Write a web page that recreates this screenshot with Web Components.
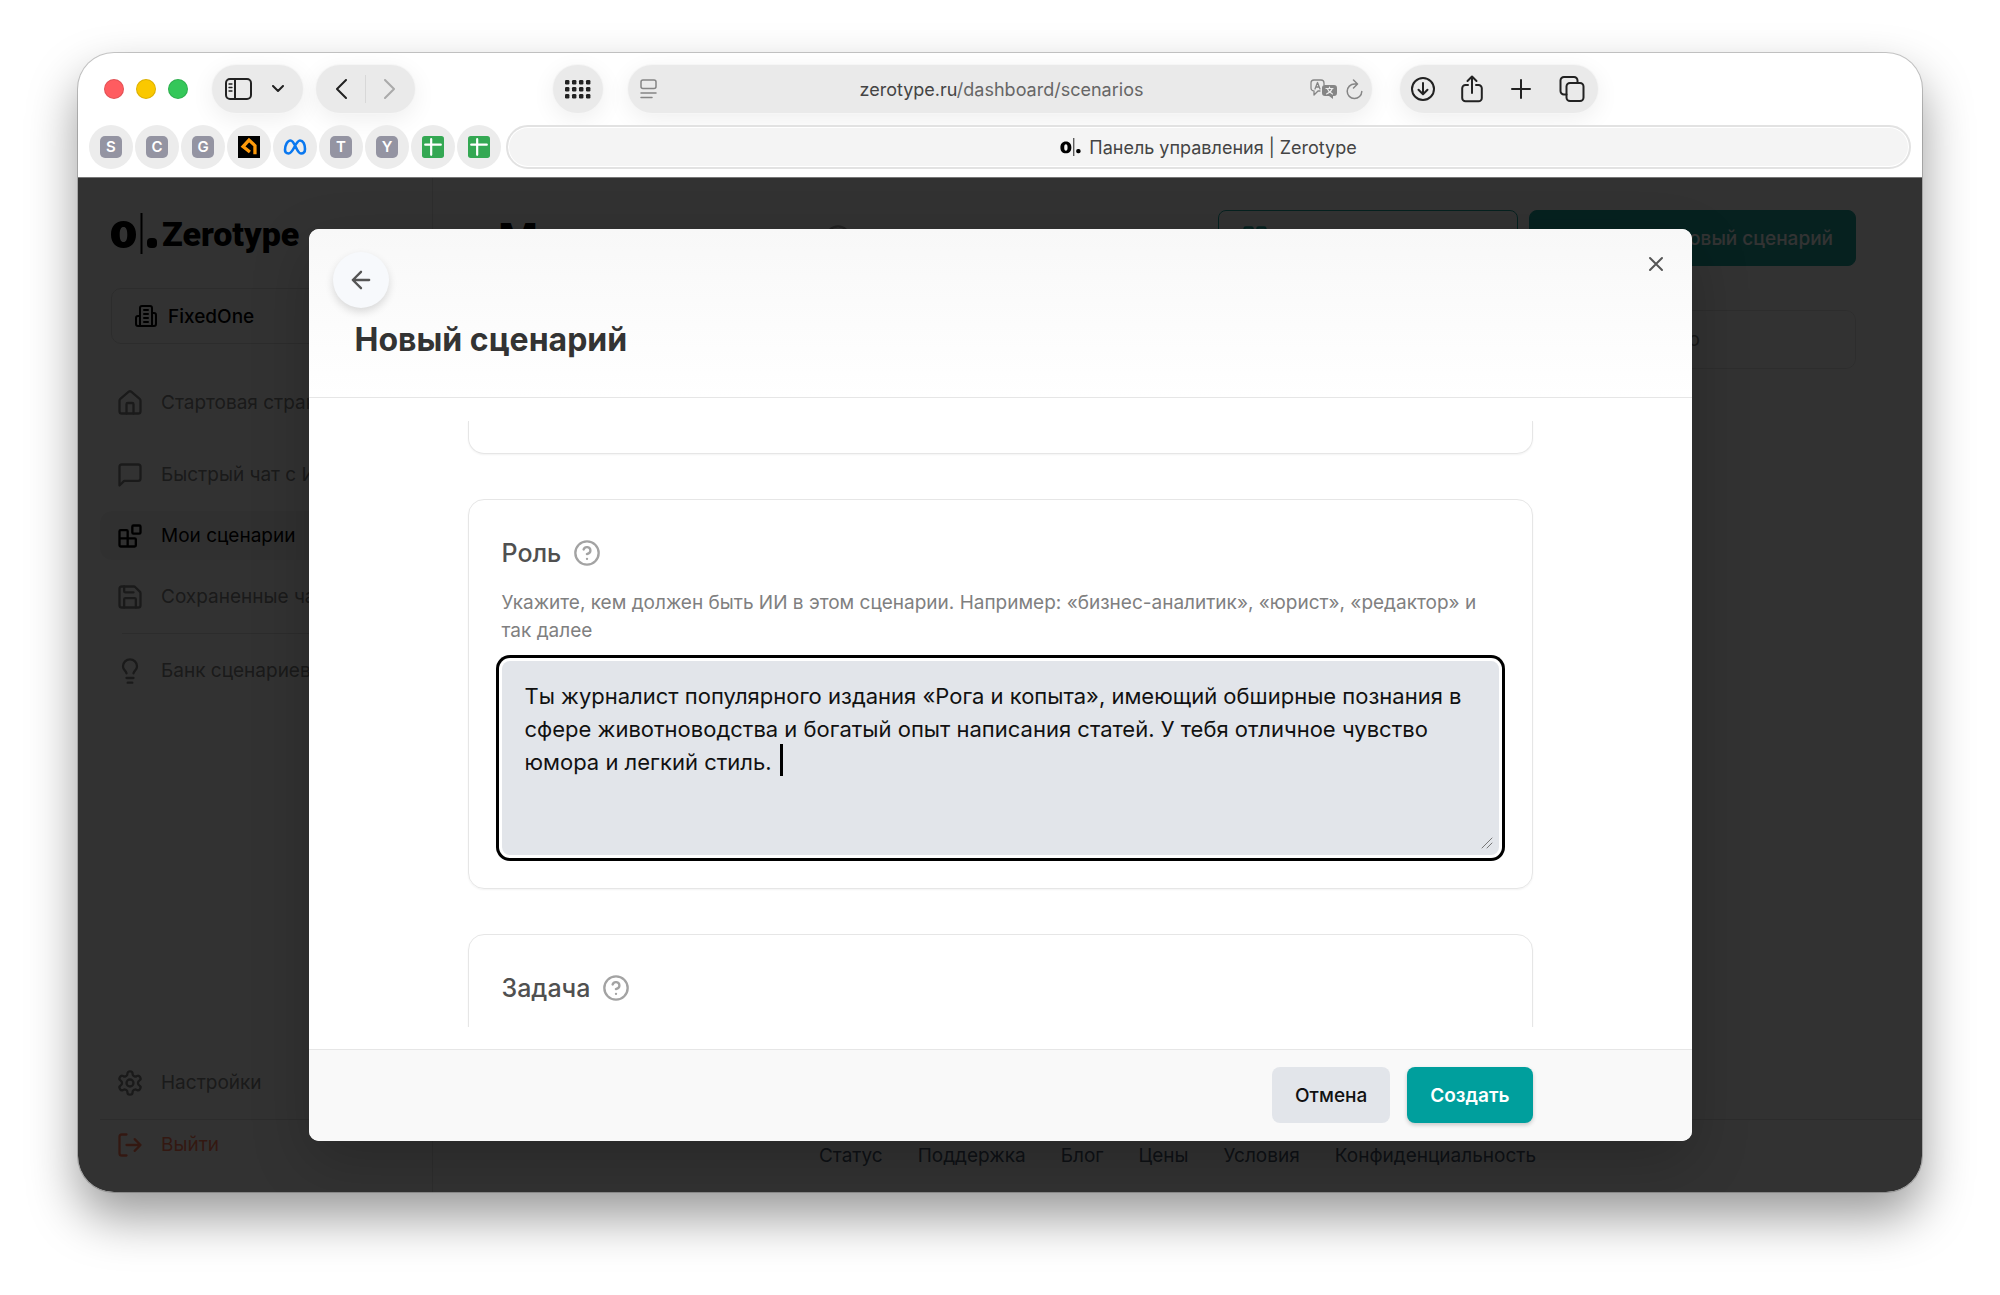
<!DOCTYPE html>
<html lang="ru">
<head>
<meta charset="utf-8">
<meta name="viewport" content="width=device-width, initial-scale=1">
<title>Панель управления | Zerotype</title>
<style>
html {
  height: 100%;
}
body {
  margin: 0;
  box-sizing: border-box;
  height: 100%;
  min-height: 900px;
  padding: 53px 78px 103px;
  background-color: #fff;
  font-family: Inter, "Liberation Sans", sans-serif;
  font-size: 19px;
  color: #000;
}
</style>
</head>
<body>
<browser-window>
  <browser-toolbar slot="chrome"></browser-toolbar>
  <dashboard-page>
    <side-bar slot="sidebar"></side-bar>
    <scenario-list></scenario-list>
    <modal-dialog slot="dialog" heading="Новый сценарий">
      <form-card class="cut"></form-card>
      <form-card heading="Роль">
        <prompt-field></prompt-field>
      </form-card>
      <form-card heading="Задача" class="last"></form-card>
    </modal-dialog>
  </dashboard-page>
</browser-window>

<script>
/**
 * Icon drawings: viewBox and inner markup.
 */
const icons = {
  panel: ['0 0 27 22', '<rect x="1" y="1" width="25" height="20" rx="4"/><path d="M10 1v20"/><path d="M4 6h3M4 9.500h3M4 13h3" stroke-width="1.300"/>'],
  down: ['0 0 12 8', '<path d="M1 1l5 5 5-5"/>'],
  back: ['0 0 12 20', '<path d="M11 1L2 10l9 9"/>'],
  forward: ['0 0 12 20', '<path d="M1 1l9 9-9 9"/>'],
  grid: ['0 0 26 19', [0, 1, 2].map(r => [0, 1, 2, 3].map(c => `<rect x="${c * 7}" y="${r * 7}" width="4.4" height="4.4" rx="1.2" fill="currentColor" stroke="none"/>`).join('')).join('')],
  reader: ['0 0 17 20', '<rect x="1" y="1" width="15" height="8.500" rx="2"/><path d="M1 14h15M1 18.500h11"/>'],
  translate: ['0 0 28 20', '<path d="M10 12H8l-4 4v-4a3 3 0 0 1-3-3V4a3 3 0 0 1 3-3h7a3 3 0 0 1 3 3v2M5 10l2.500-6.500L10 10M6 8h3"/><path d="M15 6h9a3 3 0 0 1 3 3v5a3 3 0 0 1-3 3h-1v3l-4-3h-4a3 3 0 0 1-3-3V9a3 3 0 0 1 3-3z" fill="currentColor" stroke="none"/><path d="M16 9.500h7M19.500 8v1.500M22 10c-1 2.500-3 4-5.500 5M17.500 10c1 2.500 3 4 5 5" stroke="#eaeaea" stroke-width="1.200"/>'],
  reload: ['0 0 17 21', '<path d="M15.800 12.500A7.300 7.300 0 1 1 8.500 5h2.500M7.500 1l4 4-4 4"/>'],
  download: ['0 0 24 24', '<circle cx="12" cy="12" r="11"/><path d="M12 6v11M7.500 12.800L12 17.300l4.500-4.500"/>'],
  share: ['0 0 22 28', '<path d="M7 10H4.500A3.300 3.300 0 0 0 1.200 13.300V23A3.300 3.300 0 0 0 4.500 26.300h13a3.300 3.300 0 0 0 3.300-3.300v-9.700A3.300 3.300 0 0 0 17.500 10H15M11 18V2M6.500 6L11 1.500 15.500 6"/>'],
  plus: ['0 0 20 20', '<path d="M10 1v18M1 10h18"/>'],
  tabs: ['0 0 26 26', '<rect x="7.500" y="7" width="17" height="18" rx="3.500"/><path d="M7.500 18.500H5A3.500 3.500 0 0 1 1.500 15V4.500A3.500 3.500 0 0 1 5 1h10a3.500 3.500 0 0 1 3.500 3.500V7"/>'],
  home: ['0 0 24 24', '<path d="M15 21v-8a1 1 0 0 0-1-1h-4a1 1 0 0 0-1 1v8"/><path d="M3 10a2 2 0 0 1 .709-1.528l7-6a2 2 0 0 1 2.582 0l7 6A2 2 0 0 1 21 10v9a2 2 0 0 1-2 2H5a2 2 0 0 1-2-2z"/>'],
  chat: ['0 0 24 24', '<path d="M21 15a2 2 0 0 1-2 2H7l-4 4V5a2 2 0 0 1 2-2h14a2 2 0 0 1 2 2z"/>'],
  blocks: ['0 0 24 24', '<rect width="7" height="7" x="14" y="3" rx="1"/><path d="M10 21V8a1 1 0 0 0-1-1H4a1 1 0 0 0-1 1v12a1 1 0 0 0 1 1h12a1 1 0 0 0 1-1v-5a1 1 0 0 0-1-1H3"/>'],
  save: ['0 0 24 24', '<path d="M15.200 3a2 2 0 0 1 1.400.600l3.800 3.800a2 2 0 0 1 .600 1.400V19a2 2 0 0 1-2 2H5a2 2 0 0 1-2-2V5a2 2 0 0 1 2-2z"/><path d="M17 21v-7a1 1 0 0 0-1-1H8a1 1 0 0 0-1 1v7M7 3v4a1 1 0 0 0 1 1h7"/>'],
  bulb: ['0 0 24 24', '<path d="M15 14c.200-1 .700-1.700 1.500-2.500 1-.900 1.500-2.200 1.500-3.500A6 6 0 0 0 6 8c0 1 .200 2.200 1.500 3.500.700.700 1.300 1.500 1.500 2.500M9 18h6M10 22h4"/>'],
  gear: ['0 0 24 24', '<path d="M12.220 2h-.440a2 2 0 0 0-2 2v.180a2 2 0 0 1-1 1.730l-.430.250a2 2 0 0 1-2 0l-.150-.080a2 2 0 0 0-2.730.730l-.220.380a2 2 0 0 0 .730 2.730l.150.100a2 2 0 0 1 1 1.720v.510a2 2 0 0 1-1 1.740l-.150.090a2 2 0 0 0-.730 2.730l.220.380a2 2 0 0 0 2.730.730l.150-.080a2 2 0 0 1 2 0l.430.250a2 2 0 0 1 1 1.730V20a2 2 0 0 0 2 2h.440a2 2 0 0 0 2-2v-.180a2 2 0 0 1 1-1.730l.430-.250a2 2 0 0 1 2 0l.150.080a2 2 0 0 0 2.730-.730l.220-.390a2 2 0 0 0-.730-2.730l-.150-.080a2 2 0 0 1-1-1.740v-.500a2 2 0 0 1 1-1.740l.150-.090a2 2 0 0 0 .730-2.730l-.220-.380a2 2 0 0 0-2.730-.730l-.150.080a2 2 0 0 1-2 0l-.430-.250a2 2 0 0 1-1-1.730V4a2 2 0 0 0-2-2z"/><circle cx="12" cy="12" r="3"/>'],
  exit: ['0 0 24 24', '<path d="M9 21H5a2 2 0 0 1-2-2V5a2 2 0 0 1 2-2h4M16 17l5-5-5-5M21 12H9"/>'],
  building: ['0 0 24 24', '<path d="M6 22V4a2 2 0 0 1 2-2h8a2 2 0 0 1 2 2v18zM6 12H4a2 2 0 0 0-2 2v6a2 2 0 0 0 2 2h2M18 9h2a2 2 0 0 1 2 2v9a2 2 0 0 1-2 2h-2M10 6h4M10 10h4M10 14h4M10 18h4"/>'],
  dashboard: ['0 0 24 24', '<rect x="3" y="3" width="7" height="7" rx="1"/><rect x="14" y="3" width="7" height="7" rx="1"/><rect x="3" y="14" width="7" height="7" rx="1"/><rect x="14" y="14" width="7" height="7" rx="1"/>'],
  help: ['0 0 24 24', '<circle cx="12" cy="12" r="10"/><path d="M9.090 9a3 3 0 0 1 5.830 1c0 2-3 3-3 3M12 17h.010"/>'],
  arrow: ['0 0 24 24', '<path d="M12 19l-7-7 7-7M19 12H5"/>'],
  close: ['0 0 24 24', '<path d="M18 6L6 18M6 6l12 12"/>'],
  meta: ['0 0 24 24', '<path d="M2 15C2 10 4.500 5.500 7.500 5.500c4.500 0 6 13 10.500 13 2.500 0 4-1.500 4-4.500 0-5-2-8.500-5-8.500-4.500 0-6.500 13-11.500 13C3 18.500 2 17 2 15z" stroke="#0a78f0" stroke-width="2.600"/>'],
  sheet: ['0 0 24 24', '<rect x="0" y="0" width="24" height="24" rx="3" fill="#34a853" stroke="none"/><path d="M3.500 9.500h17M10 3.500v17" stroke="#fff" stroke-width="2.400"/>'],
  arch: ['0 0 24 24', '<rect width="24" height="24" fill="#000" stroke="none"/><path d="M13 17.500L5.500 11.500 12 4.500l6.500 6V20" stroke="#ff9a0a" stroke-width="3.600" stroke-linecap="butt" stroke-linejoin="miter"/>'],
  mark: ['0 0 46 41', '<path fill-rule="evenodd" fill="currentColor" stroke="none" d="M12.500 8C20.500 8 25 13.500 25 21.500S20.500 35 12.500 35 0 29.500 0 21.500 4.500 8 12.500 8zm0 6c-2.500 0-3.800 2.500-3.800 7.500s1.300 7.500 3.800 7.500 3.800-2.500 3.800-7.500-1.300-7.500-3.800-7.500z"/><path d="M30.500 0v41" stroke-width="2" stroke-linecap="butt"/><rect x="36" y="25" width="10" height="10" rx="4" fill="currentColor" stroke="none"/>'],
  grip: ['0 0 12 12', '<path d="M1 11L11 1M6 11l5-5"/>']
}

/**
 * Drawn icon. The size comes from the outside.
 */
customElements.define('ui-icon', class extends HTMLElement {
  constructor () {
    super()
    this.attachShadow({ mode: 'open' })
  }

  connectedCallback () {
    const [box, body] = icons[this.getAttribute('name')]
    const size = this.getAttribute('size') || 24
    const width = this.getAttribute('width') || size
    const stroke = this.getAttribute('stroke') || 2
    this.shadowRoot.innerHTML = `
<style>
:host{ display: inline-flex; flex: none; }
svg{ display: block; }
</style>
<svg width="${width}" height="${size}" viewBox="${box}" fill="none" stroke="currentColor"
  stroke-width="${stroke}" stroke-linecap="round" stroke-linejoin="round" aria-hidden="true">${body}</svg>`
  }
})

/**
 * Registers an element whose shadow root is cloned from a template.
 *
 * @param {string} name of the element.
 * @param {string} html of the shadow root.
 */
function defineElement (name, html) {
  const template = document.createElement('template')
  template.innerHTML = html
  customElements.define(name, class extends HTMLElement {
    constructor () {
      super()
      this.attachShadow({ mode: 'open' }).appendChild(template.content.cloneNode(true))
    }

    connectedCallback () {
      const heading = this.shadowRoot.querySelector('.heading')
      if (heading) {
        heading.textContent = this.getAttribute('heading') || ''
      }
    }
  })
}

defineElement('browser-window', `
<style>
:host{
  display: flex;
  flex-direction: column;
  height: 100%;
  border-radius: 36px;
  overflow: hidden;
  background-color: #fff;
  box-shadow: 0 0 0 1px rgba(0, 0, 0, .2), 0 25px 50px rgba(0, 0, 0, .4);
}
</style>
<slot name="chrome"></slot>
<slot></slot>
`)

defineElement('browser-toolbar', `
<style>
:host{
  display: block;
  flex: none;
  padding: 12px 11px 8px;
  border-bottom: 1px solid #777;
  color: #222;
  font-size: 18px;
}
button{
  border: 0;
  padding: 0;
  background: none;
  color: inherit;
  font: inherit;
  display: flex;
  align-items: center;
  justify-content: center;
}
.bar{
  display: grid;
  grid-template-columns: 20fr 27fr 20fr;
  margin: 0 -11px;
}
.left, .right{
  display: flex;
  align-items: center;
}
.left{ padding: 0 25px 0 26px; }
.right{ padding-left: 28px; }
.lights{
  display: flex;
  gap: 12px;
  margin-right: 24px;
}
.lights i{
  width: 20px;
  height: 20px;
  border-radius: 50%;
  box-shadow: inset 0 0 0 1px rgba(0, 0, 0, .12);
}
.red{ background-color: #ff5c60; }
.yellow{ background-color: #fac800; }
.green{ background-color: #34c759; }
.pill{
  display: flex;
  align-items: center;
  box-sizing: border-box;
  height: 48px;
  border-radius: 24px;
  background-color: #eaeaea;
  box-shadow: 0 0 0 1px #f6f6f6, 0 6px 24px rgba(0, 0, 0, .07);
}
.views{ padding: 0 19px 0 13px; gap: 20px; margin-right: 13px; }
.history{ padding: 0 19px; gap: 18px; }
.history hr{ width: 1px; height: 28px; margin: 0; border: 0; background-color: #d8d8d8; }
.off{ color: #aaa; }
.apps{ width: 50px; justify-content: center; margin-left: auto; }
.address{
  display: grid;
  grid-template-columns: 1fr auto 1fr;
  padding: 0 9px 0 12px;
  color: #858585;
}
.address .tools{
  display: flex;
  align-items: center;
  justify-content: flex-end;
  gap: 8px;
}
.url{ color: #666; }
.url b{ color: #444; font-weight: 400; }
.actions{ gap: 26px; padding: 0 13px 0 11px; }
.tabs{
  display: flex;
  gap: 2px;
  margin-top: 12px;
}
.fav{
  flex: none;
  width: 44px;
  height: 44px;
  border-radius: 50%;
  background-color: #ececec;
}
.fav span{
  width: 22px;
  line-height: 22px;
  border-radius: 5px;
  background-color: #9494a2;
  color: #fff;
  font-size: 15px;
  font-weight: 600;
}
.tab{
  flex: 1;
  gap: 8px;
  height: 44px;
  margin-left: 3px;
  box-sizing: border-box;
  border: 2px solid #e2e2e2;
  border-radius: 22px;
  background-color: #f4f4f4;
  box-shadow: inset 0 0 0 1px #fff;
  color: #444;
}
.tab ui-icon{ color: #000; }
</style>
<div class="bar">
  <div class="left">
    <div class="lights"><i class="red"></i><i class="yellow"></i><i class="green"></i></div>
    <div class="pill views">
      <button aria-label="Боковое меню"><ui-icon name="panel" width="27" size="22"></ui-icon></button>
      <button aria-label="Группы вкладок"><ui-icon name="down" width="12" size="8"></ui-icon></button>
    </div>
    <div class="pill history">
      <button aria-label="Назад"><ui-icon name="back" width="12" size="20"></ui-icon></button>
      <hr>
      <button class="off" aria-label="Вперед"><ui-icon name="forward" width="12" size="20"></ui-icon></button>
    </div>
    <button class="pill apps" aria-label="Сетка"><ui-icon name="grid" width="26" size="19"></ui-icon></button>
  </div>
  <div class="pill address">
    <ui-icon name="reader" width="17" size="20" stroke="1.500"></ui-icon>
    <span class="url"><b>zerotype.ru</b>/dashboard/scenarios</span>
    <div class="tools">
      <ui-icon name="translate" width="28" size="20" stroke="1.300"></ui-icon>
      <button aria-label="Обновить"><ui-icon name="reload" width="17" size="21" stroke="1.500"></ui-icon></button>
    </div>
  </div>
  <div class="right">
    <div class="pill actions">
      <button aria-label="Загрузки"><ui-icon name="download"></ui-icon></button>
      <button aria-label="Поделиться"><ui-icon name="share" width="22" size="28"></ui-icon></button>
      <button aria-label="Новая вкладка"><ui-icon name="plus" width="24" size="20"></ui-icon></button>
      <button aria-label="Все вкладки"><ui-icon name="tabs" size="26"></ui-icon></button>
    </div>
  </div>
</div>
<div class="tabs">
  <button class="fav"><span>S</span></button>
  <button class="fav"><span>C</span></button>
  <button class="fav"><span>G</span></button>
  <button class="fav" aria-label="Arch"><ui-icon name="arch" size="22"></ui-icon></button>
  <button class="fav" aria-label="Meta"><ui-icon name="meta" size="24"></ui-icon></button>
  <button class="fav"><span>T</span></button>
  <button class="fav"><span>Y</span></button>
  <button class="fav" aria-label="Таблица"><ui-icon name="sheet" size="22"></ui-icon></button>
  <button class="fav" aria-label="Таблица"><ui-icon name="sheet" size="22"></ui-icon></button>
  <button class="tab"><ui-icon name="mark" width="21" size="18" stroke="1"></ui-icon>Панель управления | Zerotype</button>
</div>
`)

defineElement('dashboard-page', `
<style>
:host{
  flex: 1;
  min-height: 0;
  display: grid;
  grid-template-columns: 355px 1fr;
  position: relative;
  background-color: #fbfbfb;
}
.overlay{
  position: absolute;
  inset: 0;
  display: grid;
  place-items: center;
  background-color: rgba(0, 0, 0, .8);
}
</style>
<slot name="sidebar"></slot>
<slot></slot>
<div class="overlay"><slot name="dialog"></slot></div>
`)

defineElement('side-bar', `
<style>
:host{
  display: flex;
  flex-direction: column;
  padding: 35px 22px 23px;
  border-right: 1px solid #e2e2e2;
}
.logo{
  display: flex;
  align-items: center;
  gap: 5px;
  height: 41px;
  padding-left: 11px;
  color: #000;
  text-decoration: none;
  font: 900 34px Roboto, sans-serif;
}
.workspace{
  display: flex;
  align-items: center;
  gap: 10px;
  height: 56px;
  margin: 34px 11px;
  padding: 0 22px;
  border: 1px solid #dadada;
  border-radius: 10px;
  background: none;
  box-sizing: border-box;
  color: #000;
  font: 500 19px Inter, sans-serif;
}
nav{
  display: flex;
  flex-direction: column;
  gap: 12px;
}
nav.bottom{ margin-top: auto; gap: 0; }
a.item{
  display: flex;
  align-items: center;
  gap: 17px;
  height: 49px;
  padding: 0 16px;
  border-radius: 12px;
  color: #828282;
  text-decoration: none;
  white-space: nowrap;
}
a.start{ margin-bottom: 11px; }
a.active{ background-color: #f0f0f0; color: #000; }
a.exit{ color: #ff7858; }
hr{
  width: 100%;
  height: 1px;
  margin: 0;
  border: 0;
  background-color: #dadada;
}
nav.top hr{ width: auto; margin: 0 22px; }
nav.bottom hr{ margin-top: 12px; }
</style>
<a class="logo" href="#"><ui-icon name="mark" width="46" size="41"></ui-icon>Zerotype</a>
<button class="workspace"><ui-icon name="building"></ui-icon>FixedOne</button>
<nav class="top">
  <a class="item start" href="#"><ui-icon name="home" size="28"></ui-icon>Стартовая страница</a>
  <a class="item" href="#"><ui-icon name="chat" size="28"></ui-icon>Быстрый чат с ИИ</a>
  <a class="item active" href="#"><ui-icon name="blocks" size="28"></ui-icon>Мои сценарии</a>
  <a class="item" href="#"><ui-icon name="save" size="28"></ui-icon>Сохраненные чаты</a>
  <hr>
  <a class="item" href="#"><ui-icon name="bulb" size="28"></ui-icon>Банк сценариев</a>
</nav>
<nav class="bottom">
  <a class="item" href="#"><ui-icon name="gear" size="28"></ui-icon>Настройки</a>
  <hr>
  <a class="item exit" href="#"><ui-icon name="exit" size="28"></ui-icon>Выйти</a>
</nav>
`)

defineElement('scenario-list', `
<style>
:host{
  display: flex;
  flex-direction: column;
  min-width: 0;
}
header{
  display: flex;
  align-items: center;
  gap: 11px;
  padding: 32px 66px 44px 65px;
}
h1{
  margin: 0;
  font-size: 43px;
  font-weight: 700;
  line-height: 56px;
}
header ui-icon.help{ color: #a3a3a3; margin-right: auto; }
button{
  display: flex;
  align-items: center;
  box-sizing: border-box;
  height: 56px;
  padding: 0 22px;
  border: 1px solid #20a39b;
  border-radius: 8px;
  background: none;
  color: #20a39b;
  font: 500 19px Inter, sans-serif;
}
.bank{ width: 300px; }
.new{
  width: 327px;
  justify-content: flex-end;
  background-color: #20a39b;
  color: #fff;
}
.row{
  display: flex;
  align-items: center;
  justify-content: flex-end;
  box-sizing: border-box;
  height: 59px;
  margin: 0 66px 0 65px;
  padding-right: 155px;
  border: 1px solid #e2e2e2;
  border-radius: 10px;
  color: #828282;
}
footer{
  display: flex;
  justify-content: center;
  gap: 35px;
  margin-top: auto;
  border-top: 1px solid #dadada;
  line-height: 72px;
}
footer a{ color: #475569; text-decoration: none; }
</style>
<header>
  <h1>Мои сценарии</h1>
  <ui-icon class="help" name="help" size="28"></ui-icon>
  <button class="bank" aria-label="Банк сценариев"><ui-icon name="dashboard" size="28"></ui-icon></button>
  <button class="new">Новый сценарий</button>
</header>
<div class="row">о</div>
<footer>
  <a href="#">Статус</a>
  <a href="#">Поддержка</a>
  <a href="#">Блог</a>
  <a href="#">Цены</a>
  <a href="#">Условия</a>
  <a href="#">Конфиденциальность</a>
</footer>
`)

defineElement('modal-dialog', `
<style>
:host{
  display: flex;
  flex-direction: column;
  width: 75%;
  height: 90%;
  border-radius: 10px;
  overflow: hidden;
  background-color: #fff;
  box-shadow: 0 20px 60px rgba(0, 0, 0, .2);
}
header{
  display: grid;
  grid-template-columns: 1fr auto;
  grid-template-rows: 56px auto;
  align-items: start;
  box-sizing: border-box;
  height: 169px;
  padding: 23px 24px 0;
  border-bottom: 1px solid #e6e6e6;
  background-image: linear-gradient(#f8f8f8, #fff);
}
header button{
  display: flex;
  align-items: center;
  justify-content: center;
  border: 0;
  padding: 0;
  background: none;
  color: #555;
}
header .back{
  width: 56px;
  height: 56px;
  border-radius: 50%;
  background-color: #f7f9fc;
  box-shadow: 0 4px 8px rgba(0, 0, 0, .14);
}
h2{
  margin: 12px 0 0 22px;
  font-size: 32px;
  font-weight: 700;
  line-height: 40px;
  color: #333;
}
.body{
  flex: 1;
  min-height: 0;
  padding: 23px 0 22px;
  display: flex;
}
.scroll{
  flex: 1;
  display: flex;
  flex-direction: column;
  align-items: center;
  gap: 45px;
  overflow: hidden;
}
footer{
  flex: none;
  padding: 17px 159px 18px;
  border-top: 1px solid #e6e6e6;
  background-color: #f9f9f9;
  display: flex;
  justify-content: flex-end;
  gap: 17px;
}
footer button{
  height: 56px;
  padding: 0 23px;
  border: 0;
  border-radius: 8px;
  background-color: #e2e5ea;
  color: #111;
  font: 500 19px Inter, sans-serif;
}
footer .create{
  background-color: #009f9d;
  color: #fff;
  font-weight: 600;
  box-shadow: 0 2px 4px rgba(0, 0, 0, .2);
}
</style>
<header>
  <button class="back" aria-label="Назад"><ui-icon name="arrow" size="28"></ui-icon></button>
  <button aria-label="Закрыть"><ui-icon name="close"></ui-icon></button>
  <h2 class="heading"></h2>
</header>
<div class="body"><div class="scroll"><slot></slot></div></div>
<footer>
  <button>Отмена</button>
  <button class="create">Создать</button>
</footer>
`)

defineElement('form-card', `
<style>
:host{
  display: block;
  flex: none;
  box-sizing: border-box;
  width: calc(100% - 318px);
  padding: 33px;
  border: 1px solid #e6e6e6;
  border-radius: 16px;
  box-shadow: 0 1px 2px rgba(0, 0, 0, .05);
}
/* the card that is scrolled almost out of view */
:host(.cut){
  height: 33px;
  padding: 0;
  border-top: 0;
  border-radius: 0 0 16px 16px;
}
:host(.cut) .title{ display: none; }
:host(.last){ height: 390px; }
.title{
  display: flex;
  align-items: center;
  gap: 12px;
  height: 40px;
}
h3{
  margin: 0;
  font-size: 25px;
  font-weight: 500;
  color: #505050;
}
ui-icon{ color: #a3a3a3; }
</style>
<div class="title"><h3 class="heading"></h3><ui-icon name="help" size="28"></ui-icon></div>
<slot></slot>
`)

defineElement('prompt-field', `
<style>
:host{ display: block; }
label{
  display: block;
  margin: 16px 0;
  font-size: 19px;
  line-height: 28px;
  color: #808080;
}
.box{ position: relative; }
textarea{
  display: block;
  box-sizing: border-box;
  width: 100%;
  height: 194px;
  padding: 19px 23px;
  border: 0;
  border-radius: 8px;
  outline: 0;
  resize: none;
  background-color: #e2e5ea;
  box-shadow: 0 0 0 3px #fff, 0 0 0 6px #000;
  color: #111;
  font: 22px/33px Inter, sans-serif;
}
.caret{
  position: absolute;
  left: 278px;
  top: 83px;
  width: 3px;
  height: 32px;
  background-color: #000;
}
.grip{
  position: absolute;
  right: 6px;
  bottom: 6px;
  color: #777;
}
</style>
<label for="role">Укажите, кем должен быть ИИ в этом сценарии. Например: «бизнес-аналитик», «юрист», «редактор» и так далее</label>
<div class="box">
  <textarea id="role">Ты журналист популярного издания «Рога и копыта», имеющий обширные познания в сфере животноводства и богатый опыт написания статей. У тебя отличное чувство юмора и легкий стиль. </textarea>
  <span class="caret"></span>
  <ui-icon class="grip" name="grip" size="12" stroke="1"></ui-icon>
</div>
`)
</script>
</body>
</html>
